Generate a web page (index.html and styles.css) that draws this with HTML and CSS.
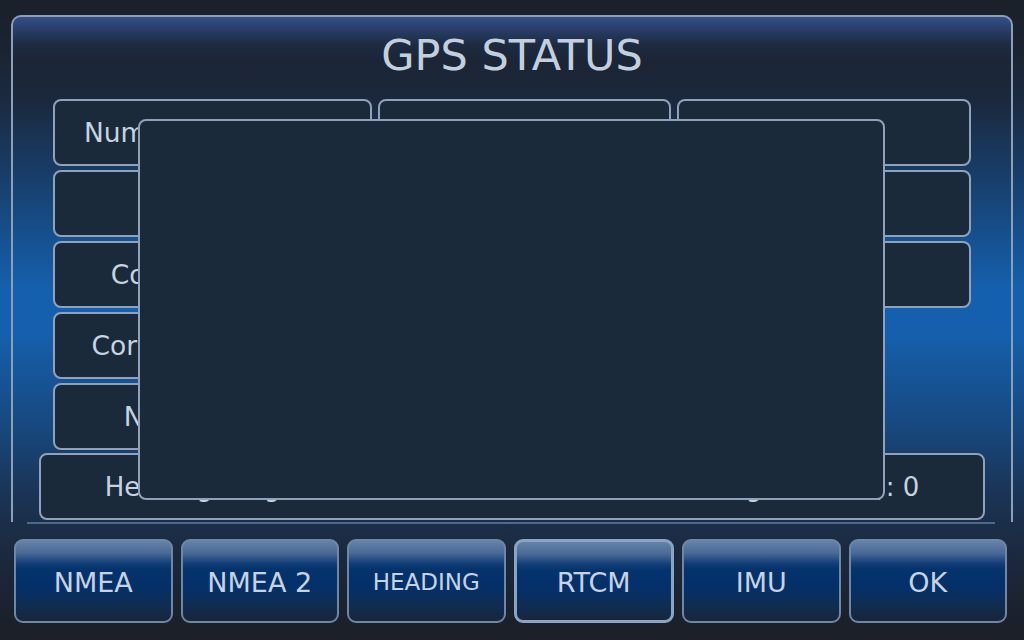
FILE: index.html
```html
<!DOCTYPE html>
<html>
<head>
<meta charset="utf-8">
<title>GPS Status</title>
<link rel="stylesheet" href="styles.css">
</head>
<body>
<div class="screen">
  <section class="panel">
    <h1 class="title">GPS STATUS</h1>
    <div class="grid">
      <div class="card c1">Number of Sats: 12</div>
      <div class="card c2">Fix Type: RTK</div>
      <div class="card c3">HDOP</div>
      <div class="card c1">HDOP: 0</div>
      <div class="card c2">Longitude: 0.000000</div>
      <div class="card c3">Alt</div>
      <div class="card c1">Corr. Age: 0.0 s</div>
      <div class="card c2">Speed: 0.0 km/h</div>
      <div class="card c3">0.0</div>
      <div class="card c1">Corrections: DGPS</div>
      <div class="card c1">NTRIP: Active</div>
    </div>
    <div class="card wide">Heading (deg): 0.00   Baseline (m): 0.00   Heading Sats (all): 0</div>
  </section>
  <div class="separator"></div>
  <nav class="buttons">
    <button class="btn">NMEA</button>
    <button class="btn">NMEA 2</button>
    <button class="btn small">HEADING</button>
    <button class="btn active">RTCM</button>
    <button class="btn">IMU</button>
    <button class="btn">OK</button>
  </nav>
  <div class="dialog"></div>
</div>
</body>
</html>
```

FILE: styles.css
```css
* { box-sizing: border-box; }

html, body {
  margin: 0;
  padding: 0;
}

body {
  width: 1024px;
  height: 640px;
  overflow: hidden;
  background: #1b2029;
  font-family: "DejaVu Sans", "Verdana", sans-serif;
  color: #c6d3e2;
}

.screen {
  position: relative;
  width: 1024px;
  height: 640px;
  display: flex;
  flex-direction: column;
  background: linear-gradient(180deg,
    #1b2029 0px,
    #1b2230 40px,
    #1b2a40 100px,
    #183c66 170px,
    #1560ae 290px,
    #1560ae 330px,
    #174a82 420px,
    #1a3558 490px,
    #1b2e48 525px,
    #1b2638 575px,
    #1b2029 630px);
}

.panel {
  margin: 15px 11px 0;
  height: 507px;
  border: 2px solid #8c9fb8;
  border-bottom: none;
  border-radius: 10px 10px 0 0;
  background: linear-gradient(180deg,
    #34508a 0px,
    #2a416e 10px,
    #1d2a40 28px,
    rgba(27, 37, 54, 0.85) 45px,
    rgba(27, 37, 54, 0) 110px);
  display: flex;
  flex-direction: column;
}

.title {
  margin: 0;
  height: 82px;
  line-height: 76px;
  text-align: center;
  font-size: 43px;
  font-weight: normal;
  color: #c2cfde;
}

.grid {
  padding: 0 40px;
  display: grid;
  grid-template-columns: 319px 293px 294px;
  grid-auto-rows: 67px;
  column-gap: 6px;
  row-gap: 4px;
}

.c1 { grid-column: 1; }
.c2 { grid-column: 2; }
.c3 { grid-column: 3; }

.card {
  background: #1b2a3b;
  border: 2px solid #8fa2ba;
  border-radius: 8px;
  display: flex;
  align-items: center;
  justify-content: center;
  font-size: 26.5px;
  white-space: pre;
  overflow: hidden;
}

.wide {
  margin: 3px 26px 0;
  height: 67px;
  font-size: 26px;
}

.separator {
  height: 2px;
  margin: 0 29px 0 27px;
  background: #4d6888;
}

.buttons {
  display: flex;
  gap: 8px;
  padding: 15px 17px 0 14px;
}

.btn {
  flex: 1;
  height: 84px;
  border: 2px solid #6f87a6;
  border-radius: 9px;
  background: linear-gradient(180deg,
    #6383aa 0px,
    #4a6a96 12px,
    #143f78 22px,
    #05336c 28px,
    #04306a 46px,
    #0f2d52 64px,
    #1b2436 82px);
  color: #c6d3e2;
  font-family: "DejaVu Sans", "Verdana", sans-serif;
  font-size: 27px;
  padding: 2px 0 0;
  line-height: 1;
}

.btn.small {
  font-size: 23px;
}

.btn.active {
  border: 3px solid #8ba4c4;
}

.dialog {
  position: absolute;
  left: 138px;
  top: 119px;
  width: 747px;
  height: 381px;
  background: #1b2a3b;
  border: 2px solid #8fa2ba;
  border-radius: 8px;
}
```
